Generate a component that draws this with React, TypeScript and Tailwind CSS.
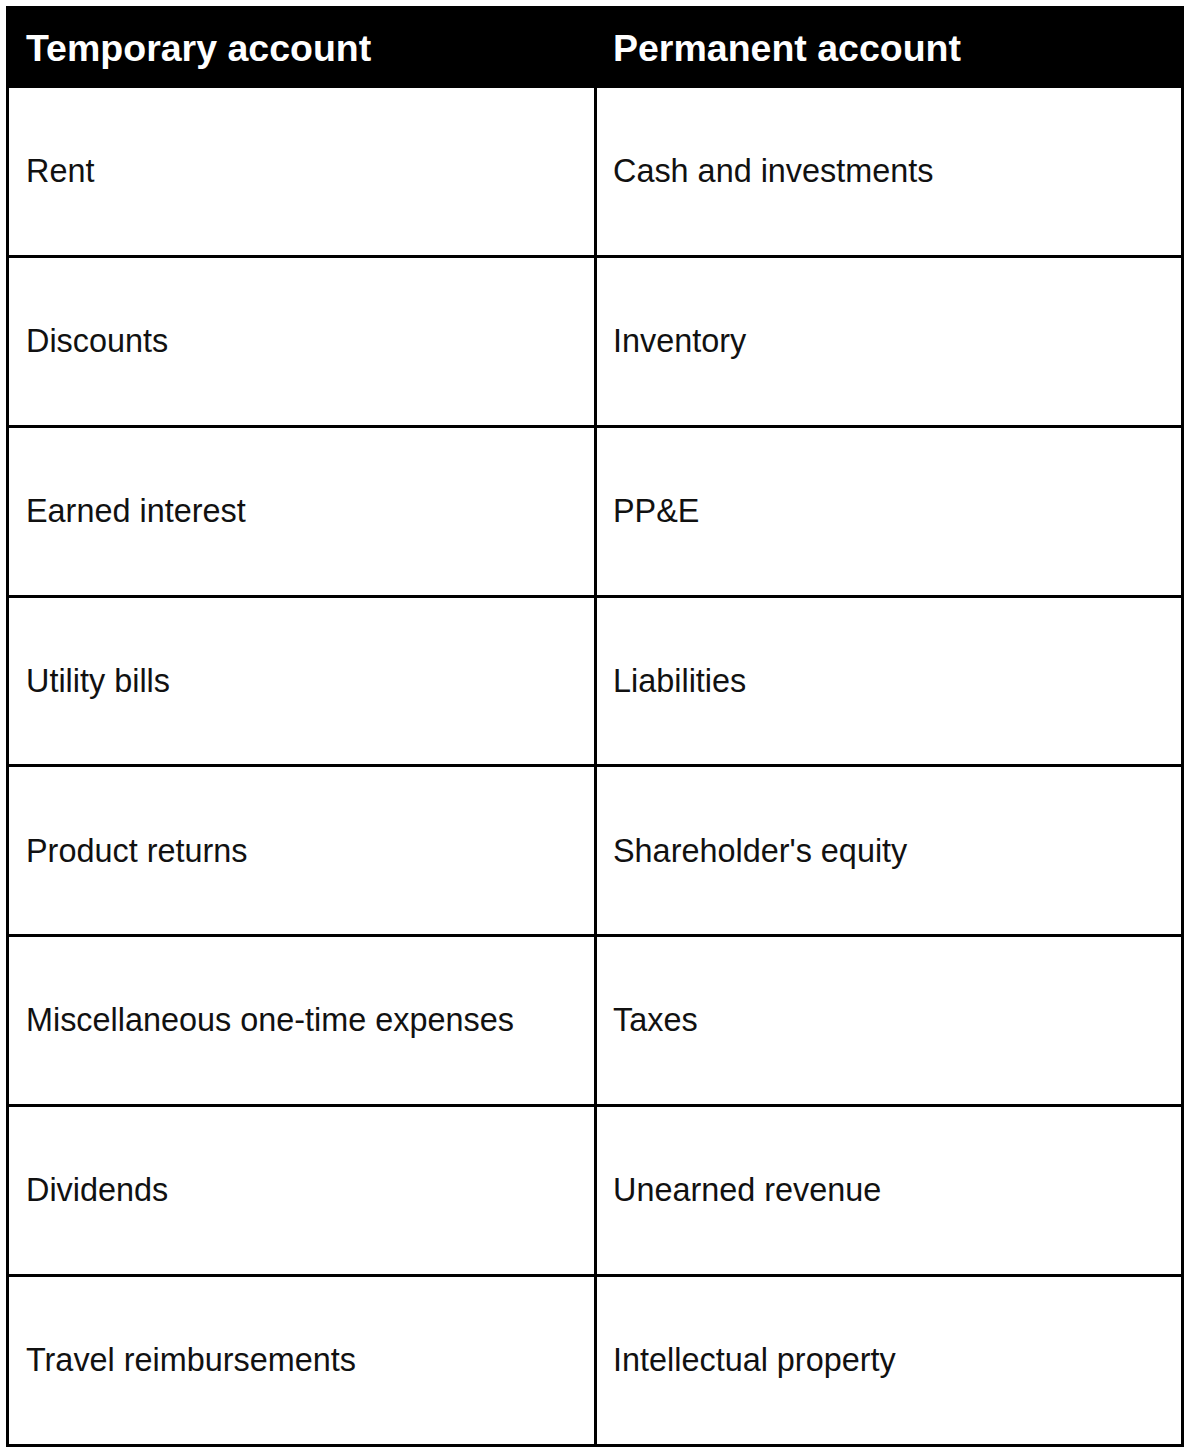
const rows: [string, string][] = [
  ["Rent", "Cash and investments"],
  ["Discounts", "Inventory"],
  ["Earned interest", "PP&E"],
  ["Utility bills", "Liabilities"],
  ["Product returns", "Shareholder's equity"],
  ["Miscellaneous one-time expenses", "Taxes"],
  ["Dividends", "Unearned revenue"],
  ["Travel reimbursements", "Intellectual property"],
];

export default function App() {
  return (
    <div className="min-h-screen bg-white p-[6px] font-['Liberation_Sans',Arial,sans-serif]">
      <div className="w-[1178px] border-[3px] border-black">
        {/* header */}
        <div className="grid h-[79px] grid-cols-[585px_3px_584px] bg-black text-[37.5px] font-bold text-white">
          <div className="flex items-center pl-[17px]">Temporary account</div>
          <div />
          <div className="flex items-center pl-[16px]">Permanent account</div>
        </div>
        {rows.map(([temp, perm], i) => (
          <div
            key={temp}
            className={`grid h-[166.86px] grid-cols-[585px_3px_584px] box-content text-[32.4px] text-[#111] ${
              i > 0 ? "border-t-[3px] border-black" : ""
            }`}
          >
            <div className="flex items-center pl-[17px]">{temp}</div>
            <div className="bg-black" />
            <div className="flex items-center pl-[16px]">{perm}</div>
          </div>
        ))}
      </div>
    </div>
  );
}
